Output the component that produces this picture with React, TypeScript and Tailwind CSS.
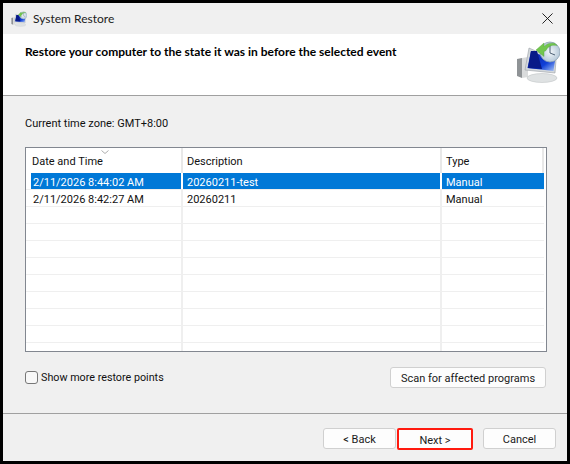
const rows = [
  { date: "2/11/2026 8:44:02 AM", desc: "20260211-test", type: "Manual", selected: true },
  { date: "2/11/2026 8:42:27 AM", desc: "20260211", type: "Manual", selected: false },
  ...Array.from({ length: 9 }, () => ({ date: "", desc: "", type: "", selected: false })),
];

// system restore icon: pc tower, monitor, clock and green arrow
const RestoreIcon = ({ className }: { className: string }) => (
  <svg viewBox="0 0 44 44" className={className}>
    <defs>
      <linearGradient id="screen" x1="0" y1="0" x2="1" y2="1">
        <stop offset="0" stopColor="#0a1a9a" />
        <stop offset="0.65" stopColor="#1040d8" />
        <stop offset="1" stopColor="#a8c4f4" />
      </linearGradient>
      <radialGradient id="clock" cx="0.5" cy="0.5" r="0.6">
        <stop offset="0" stopColor="#f4f8fb" />
        <stop offset="1" stopColor="#a9bfd2" />
      </radialGradient>
    </defs>
    <path d="M1 19l5-1v20l-5-2z" fill="#8f9396" />
    <path d="M6 18l6-1v20l-6 1z" fill="#d9dbdc" />
    <ellipse cx="26" cy="38" rx="15" ry="4.500" fill="#dfe2e3" stroke="#b8bcbe" strokeWidth="0.5" />
    <path d="M13 8l27 12-1 13-30-3z" fill="#d3d8dc" stroke="#9aa0a5" strokeWidth="0.6" />
    <path d="M15 11l24 10-1.500 10-26-3z" fill="url(#screen)" />
    <path d="M15 11h6l5 18-14-1z" fill="#081a88" />
    <circle cx="34" cy="12" r="10" fill="url(#clock)" stroke="#8ea3b5" strokeWidth="0.8" />
    <path d="M34 5v8l5 2" fill="none" stroke="#3d5166" strokeWidth="0.9" />
    <path d="M20 10l8-7v3.500c3-3 7-4 11-3l2 2c-4-1-9 0-11 5l-2 1v5z" fill="#72c64e" stroke="#4f9e36" strokeWidth="0.4" />
  </svg>
);

const Btn = ({ label, className }: { label: string; className: string }) => (
  <button className={`h-[21px] pt-[2px] bg-[#fdfdfd] border border-[#d0d0d0] rounded-[3px] text-[11px] leading-[16px] text-[#1a1a1a] ${className}`}>
    {label}
  </button>
);

export default function App() {
  return (
    <div className="w-[570px] h-[464px] bg-black p-[3px] font-['Roboto',sans-serif] text-[11px] text-[#111]">
      <div className="w-full h-full flex flex-col bg-[#f0f0f0]">
        {/* title bar */}
        <div className="h-[31px] flex items-center pl-[8px] pr-[14px]">
          <RestoreIcon className="w-[16px] h-[16px]" />
          <span className="ml-[6px] font-['Lato',sans-serif] text-[12px] text-[#222]">System Restore</span>
          <svg viewBox="0 0 12 12" className="w-[11px] h-[11px] ml-auto">
            <path d="M.5.5l11 11M11.500.5l-11 11" stroke="#111" strokeWidth="1" fill="none" />
          </svg>
        </div>

        {/* header */}
        <div className="h-[62px] bg-white border-b border-[#a0a0a0] flex justify-between pl-[22px] pr-[7px] pt-[9px]">
          <h1 className="font-['Lato',sans-serif] text-[12px] font-bold text-black leading-[17px]">
            Restore your computer to the state it was in before the selected event
          </h1>
          <RestoreIcon className="w-[44px] h-[44px] -mt-[3px]" />
        </div>

        {/* content */}
        <div className="flex-1 flex flex-col px-[22px] border-b border-[#a0a0a0]">
          <p className="mt-[20px] leading-[16px]">Current time zone: GMT+8:00</p>

          <div className="mt-[15px] w-[522px] h-[205px] bg-white border border-[#828790] relative overflow-hidden">
            <div className="h-[25px] flex items-center">
              <div className="w-[157px] h-full border-r-2 border-[#e8e8e8] pl-[6px] pt-[6px]">Date and Time</div>
              <div className="w-[259px] h-full border-r-2 border-[#e8e8e8] pl-[4px] pt-[6px]">Description</div>
              <div className="w-[102px] h-full border-r-2 border-[#e8e8e8] pl-[4px] pt-[6px]">Type</div>
            </div>
            <svg viewBox="0 0 8 4" className="absolute left-[75px] top-[2px] w-[8px] h-[4px]">
              <path d="M.5.5L4 3.500 7.500.5" stroke="#9a9a9a" strokeWidth="0.8" fill="none" />
            </svg>
            {rows.map((r, i) => (
              <div key={i} className={`h-[17px] w-[518px] flex leading-[14px] border-b border-[#efefef] ${r.selected ? "text-white" : ""}`}>
                <div className={`w-[157px] border-r-2 pl-[7px] pt-[3px] ${r.selected ? "bg-[linear-gradient(90deg,white_5px,#0078d7_5px)] border-white" : "border-[#efefef]"}`}>{r.date}</div>
                <div className={`w-[259px] border-r-2 pl-[4px] pt-[3px] ${r.selected ? "bg-[#0078d7] border-white" : "border-[#efefef]"}`}>{r.desc}</div>
                <div className={`w-[102px] pl-[4px] pt-[3px] ${r.selected ? "bg-[#0078d7]" : ""}`}>{r.type}</div>
              </div>
            ))}
          </div>

          <div className="mt-[15px] flex items-start justify-between w-[521px]">
            <label className="flex items-center mt-[3px]">
              <span className="w-[13px] h-[13px] bg-[#f8f8f8] border border-[#777] rounded-[3px]" />
              <span className="ml-[3px] pt-[1px] text-[10.750px] leading-[14px]">Show more restore points</span>
            </label>
            <Btn label="Scan for affected programs" className="w-[156px]" />
          </div>
        </div>

        {/* footer */}
        <div className="h-[47px] flex items-start pl-[320px] pt-[14px]">
          <Btn label="< Back" className="w-[73px] pt-[3px]" />
          <button className="w-[76px] h-[22px] ml-[1px] pt-[3px] bg-[#fdfdfd] border-2 border-[#ff1a0f] rounded-[2px] text-[11px] leading-[14px] text-[#1a1a1a]">Next &gt;</button>
          <Btn label="Cancel" className="w-[73px] ml-[10px] pt-[3px]" />
        </div>
      </div>
    </div>
  );
}
